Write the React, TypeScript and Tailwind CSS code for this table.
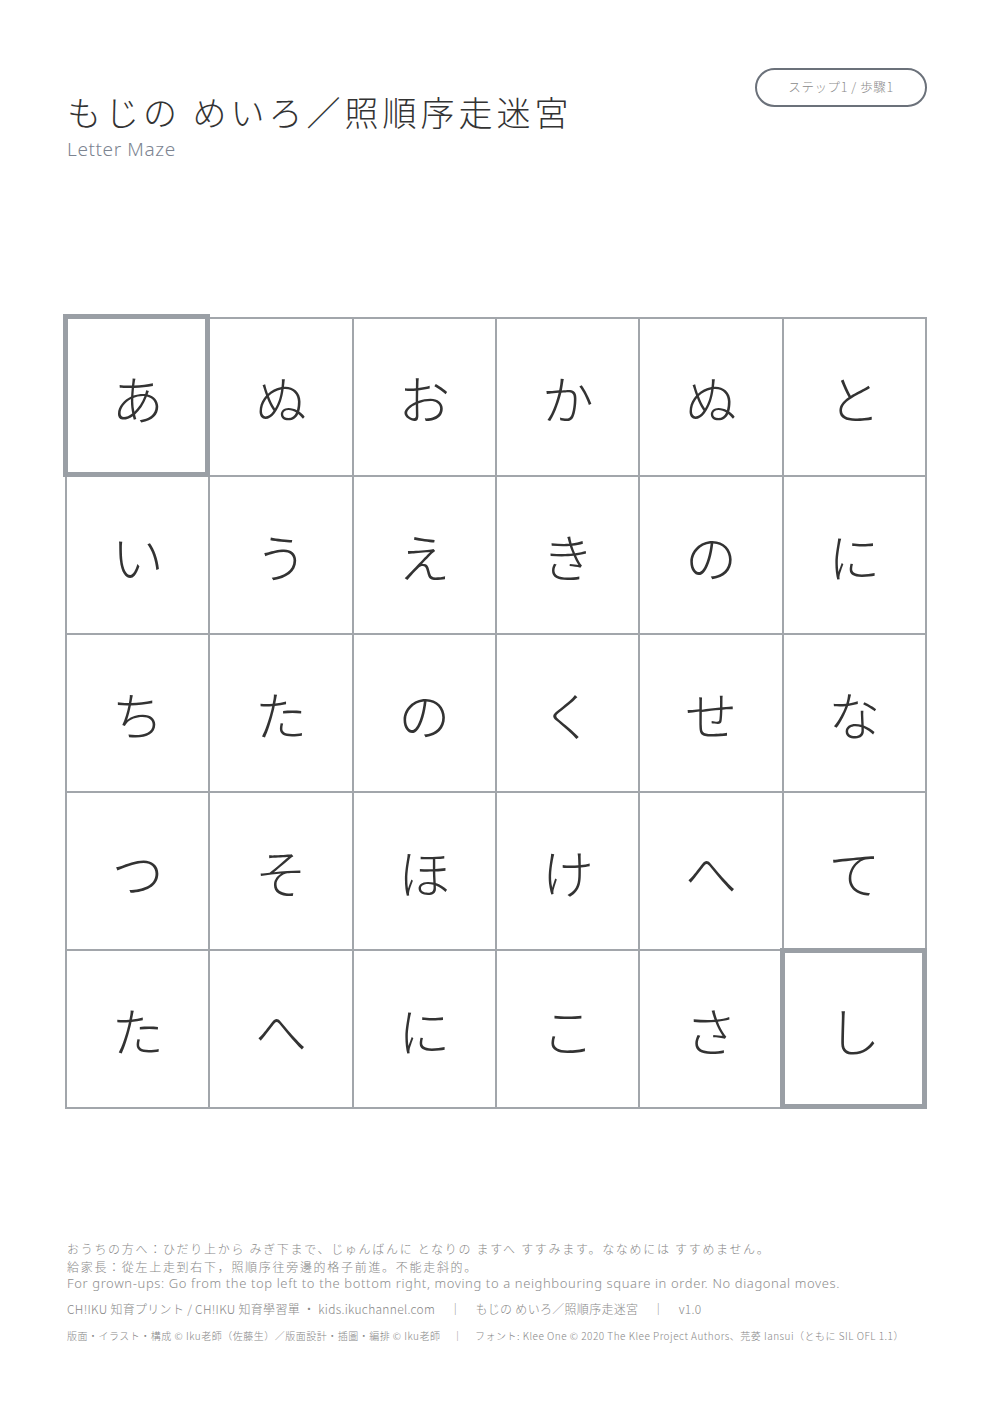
import React from "react";

const rows: string[][] = [
  ["あ", "ぬ", "お", "か", "ぬ", "と"],
  ["い", "う", "え", "き", "の", "に"],
  ["ち", "た", "の", "く", "せ", "な"],
  ["つ", "そ", "ほ", "け", "へ", "て"],
  ["た", "へ", "に", "こ", "さ", "し"],
];

const jp = { fontFamily: '"Noto Sans CJK JP", "Noto Sans", sans-serif' };

export default function App() {
  return (
    <div className="w-[992px] h-[1404px] bg-white relative text-[#333]" style={jp}>
      <div className="flex justify-between pl-[67px] pr-[65px] pt-[68px]">
        <div className="mt-[24px]">
          <div className="text-[34px] leading-[40px] font-light tracking-[4px] text-[#333]">
            もじの めいろ／照順序走迷宮
          </div>
          <div
            className="text-[19px] leading-[22px] mt-[6px] text-[#7c8491] font-light tracking-[0.6px]"
            style={{ fontFamily: '"Noto Sans", sans-serif' }}
          >
            Letter Maze
          </div>
        </div>
        <div className="w-[172px] h-[39px] rounded-full border-2 border-[#6b717a] flex items-center justify-center text-[12.5px] tracking-[0.6px] text-[#8a8a8a] font-light">
          ステップ1 / 歩驟1
        </div>
      </div>

      <div className="ml-[65px] mt-[157px] w-[862px] grid grid-cols-6 border-t-2 border-l-2 border-[#a2a6ab]">
        {rows.map((row, r) =>
          row.map((ch, c) => {
            const first = r === 0 && c === 0;
            const last = r === 4 && c === 5;
            return (
              <div
                key={`${r}-${c}`}
                className="relative h-[158px] border-r-2 border-b-2 border-[#a2a6ab] flex items-center justify-center"
              >
                <span className="text-[52px] leading-none text-[#333] font-light pt-[2px]">{ch}</span>
                {first && (
                  <div className="absolute -left-[4px] -top-[5px] -right-[2px] -bottom-[2px] border-[5px] border-[#9a9fa5] z-10" />
                )}
                {last && (
                  <div className="absolute -left-[4px] -top-[3px] -right-[2px] -bottom-[2px] border-[5px] border-[#9a9fa5] z-10" />
                )}
              </div>
            );
          })
        )}
      </div>

      <div className="pl-[67px] mt-[131px] text-[#888]">
        <div className="text-[12px] leading-[17.5px] tracking-[1.7px] font-light">
          おうちの方へ：ひだり上から みぎ下まで、じゅんばんに となりの ますへ すすみます。ななめには すすめません。
        </div>
        <div className="text-[12px] leading-[17.5px] tracking-[1.7px] font-light">
          給家長：從左上走到右下，照順序往旁邊的格子前進。不能走斜的。
        </div>
        <div
          className="text-[13px] leading-[17.5px] tracking-[0.62px] text-[#8e8e8e] font-light"
          style={{ fontFamily: '"Noto Sans", sans-serif' }}
        >
          For grown-ups: Go from the top left to the bottom right, moving to a neighbouring square in order. No diagonal moves.
        </div>
        <div className="text-[12px] leading-[17px] mt-[7px] font-light tracking-[0.3px]">
          CH!IKU 知育プリント / CH!IKU 知育學習單 ・ kids.ikuchannel.com
          <span className="mx-[14px]">｜</span>
          もじの めいろ／照順序走迷宮
          <span className="mx-[14px]">｜</span>
          v1.0
        </div>
        <div className="text-[10px] leading-[14px] mt-[12px] font-light tracking-[0.5px]">
          版面・イラスト・構成 © Iku老師（佐藤生）／版面設計・插圖・編排 © Iku老師
          <span className="mx-[12px]">｜</span>
          フォント: Klee One © 2020 The Klee Project Authors、芫荽 Iansui（ともに SIL OFL 1.1）
        </div>
      </div>
    </div>
  );
}
